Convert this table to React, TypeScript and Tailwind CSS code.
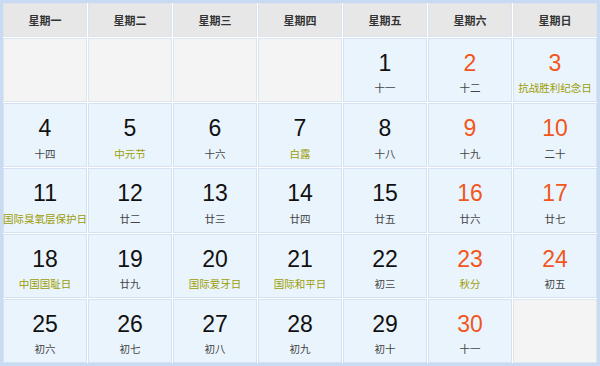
const WEEK = ['星期一', '星期二', '星期三', '星期四', '星期五', '星期六', '星期日'];

type Day = { d: number; sub: string; fest?: boolean; red?: boolean } | null;

const DAYS: Day[] = [
  null, null, null, null,
  { d: 1, sub: '十一' },
  { d: 2, sub: '十二', red: true },
  { d: 3, sub: '抗战胜利纪念日', fest: true, red: true },
  { d: 4, sub: '十四' },
  { d: 5, sub: '中元节', fest: true },
  { d: 6, sub: '十六' },
  { d: 7, sub: '白露', fest: true },
  { d: 8, sub: '十八' },
  { d: 9, sub: '十九', red: true },
  { d: 10, sub: '二十', red: true },
  { d: 11, sub: '国际臭氧层保护日', fest: true },
  { d: 12, sub: '廿二' },
  { d: 13, sub: '廿三' },
  { d: 14, sub: '廿四' },
  { d: 15, sub: '廿五' },
  { d: 16, sub: '廿六', red: true },
  { d: 17, sub: '廿七', red: true },
  { d: 18, sub: '中国国耻日', fest: true },
  { d: 19, sub: '廿九' },
  { d: 20, sub: '国际爱牙日', fest: true },
  { d: 21, sub: '国际和平日', fest: true },
  { d: 22, sub: '初三' },
  { d: 23, sub: '秋分', fest: true, red: true },
  { d: 24, sub: '初五', red: true },
  { d: 25, sub: '初六' },
  { d: 26, sub: '初七' },
  { d: 27, sub: '初八' },
  { d: 28, sub: '初九' },
  { d: 29, sub: '初十' },
  { d: 30, sub: '十一', red: true },
  null,
];

export default function App() {
  return (
    <div className="w-[600px] h-[366px] bg-white font-['Noto_Sans_CJK_SC',sans-serif]">
      <div className="h-full border-[3px] border-[#c8dbf3] grid grid-cols-7 grid-rows-[34px_repeat(5,1fr)] gap-px bg-white">
        {WEEK.map((w) => (
          <div
            key={w}
            className="flex items-center justify-center bg-[#e7e7e7] border border-[#dbe3ee] text-[11px] font-bold text-[#333]"
          >
            {w}
          </div>
        ))}
        {DAYS.map((day, i) =>
          day ? (
            <div
              key={i}
              className="flex flex-col items-center justify-center pt-[2px] bg-[#eaf4fc] border border-[#d4e2f3]"
            >
              <span
                className={`font-['Liberation_Sans',sans-serif] text-[23px] leading-normal ${
                  day.red ? 'text-[#f2561d]' : 'text-[#111]'
                }`}
              >
                {day.d}
              </span>
              <span
                className={`text-[10.5px] leading-normal whitespace-nowrap ${
                  day.fest ? 'text-[#9c9c06]' : 'text-[#444]'
                }`}
              >
                {day.sub}
              </span>
            </div>
          ) : (
            <div key={i} className="bg-[#f4f4f4] border border-[#dde5ef]" />
          )
        )}
      </div>
    </div>
  );
}
